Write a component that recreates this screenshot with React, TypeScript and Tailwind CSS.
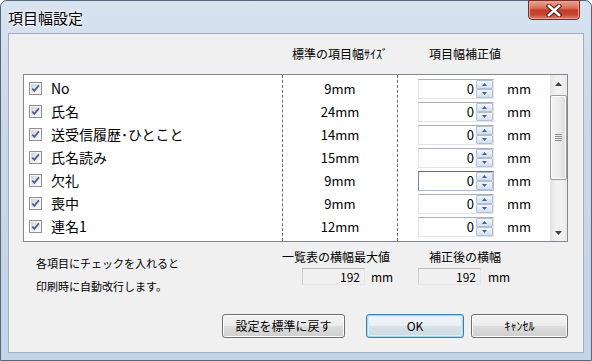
import React from 'react';

const rows = [
  { name: 'No', size: '9mm' },
  { name: '氏名', size: '24mm' },
  { name: '送受信履歴･ひとこと', size: '14mm' },
  { name: '氏名読み', size: '15mm' },
  { name: '欠礼', size: '9mm' },
  { name: '喪中', size: '9mm' },
  { name: '連名1', size: '12mm' },
];

function CheckBox() {
  return (
    <div className="w-[13px] h-[13px] shrink-0 border border-[#8f8f8f] bg-[#f6f6f6] p-[1px]">
      <div className="w-full h-full bg-[linear-gradient(135deg,#cfd2d8,#eeeff1_60%,#f7f7f7)] flex items-center justify-center">
        <svg width="9" height="9" viewBox="0 0 9 9">
          <path d="M1.2 4.5 L3.3 6.9 L7.9 1.4" stroke="#4a5c92" strokeWidth="1.7" fill="none" />
        </svg>
      </div>
    </div>
  );
}

function SpinHalf({ up }: { up: boolean }) {
  return (
    <div className="h-[9px] border border-[#b4c0d2] rounded-[1px] bg-[linear-gradient(to_bottom,#f2f6fb,#d3dff0)] flex items-center justify-center">
      <svg width="5" height="3" viewBox="0 0 5 3">
        {up ? <path d="M0 3 L2.5 0 L5 3Z" fill="#4c5f84" /> : <path d="M0 0 L2.5 3 L5 0Z" fill="#4c5f84" />}
      </svg>
    </div>
  );
}

function Spin({ focused }: { focused: boolean }) {
  return (
    <div
      className={
        focused
          ? 'ml-[20px] w-[76px] h-[20px] flex border border-[#a9bdd6] border-t-[#4f6f96] border-l-[#6f8bae] bg-white'
          : 'ml-[20px] w-[76px] h-[20px] flex border border-[#e2e3ea] border-t-[#abadb3] bg-white'
      }
    >
      <div className="flex-1 text-right pr-[2px] text-[13px] leading-[18px]">0</div>
      <div className="w-[17px] flex flex-col">
        <SpinHalf up={true} />
        <SpinHalf up={false} />
      </div>
    </div>
  );
}

function WinButton({ children, className, primary }: { children: React.ReactNode; className: string; primary?: boolean }) {
  return (
    <div
      className={
        primary
          ? `${className} h-[24px] rounded-[3px] border border-[#3c7fb1] shadow-[inset_0_0_0_1px_#9fd9f3,inset_0_0_0_2px_#d8eef8] bg-[linear-gradient(to_bottom,#f1f5f8_0%,#e9eff3_50%,#dae3ea_50%,#ccd7df_100%)] flex items-center justify-center text-[12px] leading-[14px]`
          : `${className} h-[24px] rounded-[3px] border border-[#707070] shadow-[inset_0_0_0_1px_#fbfbfb] bg-[linear-gradient(to_bottom,#f2f2f2_0%,#ebebeb_50%,#dddddd_50%,#cfcfcf_100%)] flex items-center justify-center text-[12px] leading-[14px]`
      }
    >
      {children}
    </div>
  );
}

export default function App() {
  return (
    <div className="w-[592px] h-[361px] bg-white font-['Noto_Sans_CJK_JP',sans-serif] text-black">
      <div className="w-[592px] h-[361px] flex flex-col rounded-t-[7px] border border-[#56677b] bg-[linear-gradient(to_bottom,#d8e3f0,#cbd8e9_35%,#c4d3e6)]">
        {/* title bar */}
        <div className="h-[32px] shrink-0 flex items-start">
          <div className="ml-[7px] mt-[8px] text-[15px] leading-[17px] [text-shadow:0_0_6px_#fff,0_0_3px_#fff]">項目幅設定</div>
          <div className="ml-auto mr-[11px] w-[52px] h-[20px] -mt-[1px] rounded-b-[4px] border border-[#7a2d24] shadow-[inset_0_0_0_1px_#e9a193] bg-[linear-gradient(to_bottom,#e9a593_0%,#d76e5c_40%,#c23c29_50%,#c94731_75%,#dd8366_100%)] flex items-center justify-center">
            <svg width="16" height="13" viewBox="0 0 16 13">
              <path d="M3 2 L13 11 M13 2 L3 11" stroke="#5b1c14" strokeWidth="4.6" strokeLinecap="square" />
              <path d="M3 2 L13 11 M13 2 L3 11" stroke="#ffffff" strokeWidth="2.6" strokeLinecap="square" />
            </svg>
          </div>
        </div>

        {/* client area */}
        <div className="mx-[7px] h-[320px] shrink-0 border border-[#9fb0c4] bg-[#f0f0f0] flex flex-col">
          {/* header */}
          <div className="ml-[14px] pt-[13px] flex text-[12px] leading-[14px]">
            <div className="w-[259px]" />
            <div className="w-[116px] text-center">標準の項目幅ｻｲｽﾞ</div>
            <div className="pl-[31px]">項目幅補正値</div>
          </div>

          {/* list */}
          <div className="ml-[14px] mt-[13px] w-[545px] h-[168px] border border-[#828790] bg-white flex overflow-hidden">
            <div className="w-[258px] pt-[2px]">
              {rows.map((r) => (
                <div key={r.name} className="h-[23px] flex items-center pl-[5px]">
                  <CheckBox />
                  <span className="ml-[9px] text-[14px] leading-[23px] whitespace-nowrap">{r.name}</span>
                </div>
              ))}
            </div>
            <div className="w-[116px] pt-[2px] border-x border-dashed border-[#6a6a6a]">
              {rows.map((r) => (
                <div key={r.name} className="h-[23px] text-center text-[13px] leading-[23px]">
                  {r.size}
                </div>
              ))}
            </div>
            <div className="flex-1 pt-[2px]">
              {rows.map((r, i) => (
                <div key={r.name} className="h-[23px] flex items-center">
                  <Spin focused={i === 4} />
                  <span className="ml-[13px] text-[13px] leading-[23px]">mm</span>
                </div>
              ))}
            </div>
            {/* scrollbar */}
            <div className="w-[17px] flex flex-col bg-[linear-gradient(to_right,#e3e3e3,#f1f1f1_35%,#f1f1f1_65%,#e8e8e8)]">
              <div className="h-[17px] flex items-center justify-center">
                <svg width="7" height="4" viewBox="0 0 7 4">
                  <path d="M0 4 L3.5 0 L7 4Z" fill="#404040" />
                </svg>
              </div>
              <div className="mt-[3px] h-[85px] rounded-[2px] border border-[#9b9b9b] shadow-[inset_0_0_0_1px_#fdfdfd] bg-[linear-gradient(to_right,#f4f4f4,#ececec_50%,#dcdcdc)] flex items-center justify-center">
                <svg width="7" height="8" viewBox="0 0 7 8">
                  <path d="M0 0.5 H7 M0 2.5 H7 M0 4.5 H7 M0 6.5 H7" stroke="#8c8c8c" strokeWidth="1" />
                </svg>
              </div>
              <div className="mt-auto h-[17px] flex items-center justify-center">
                <svg width="7" height="4" viewBox="0 0 7 4">
                  <path d="M0 0 L3.5 4 L7 0Z" fill="#404040" />
                </svg>
              </div>
            </div>
          </div>

          {/* info */}
          <div className="h-[72px] flex">
            <div className="ml-[27px] w-[246px] pt-[10px] text-[11px] leading-[23px]">
              <div>各項目にチェックを入れると</div>
              <div>印刷時に自動改行します。</div>
            </div>
            <div className="w-[136px] pt-[8px]">
              <div className="text-[12px] leading-[14px] whitespace-nowrap">一覧表の横幅最大値</div>
              <div className="mt-[4px] flex items-center">
                <div className="ml-[20px] w-[63px] h-[17px] border border-[#e6e6e6] border-t-[#b9b9b9] border-l-[#cfcfcf] bg-[#f0f0f0] text-right pr-[4px] text-[12px] leading-[15px]">192</div>
                <span className="ml-[6px] text-[12px] leading-[15px]">mm</span>
              </div>
            </div>
            <div className="pt-[8px]">
              <div className="pl-[11px] text-[12px] leading-[14px] whitespace-nowrap">補正後の横幅</div>
              <div className="mt-[4px] flex items-center">
                <div className="w-[63px] h-[17px] border border-[#e6e6e6] border-t-[#b9b9b9] border-l-[#cfcfcf] bg-[#f0f0f0] text-right pr-[4px] text-[12px] leading-[15px]">192</div>
                <span className="ml-[7px] text-[12px] leading-[15px]">mm</span>
              </div>
            </div>
          </div>

          {/* buttons */}
          <div className="flex">
            <WinButton className="ml-[213px] w-[123px]">設定を標準に戻す</WinButton>
            <WinButton className="ml-[21px] w-[98px]" primary>
              OK
            </WinButton>
            <WinButton className="ml-[7px] w-[97px]">ｷｬﾝｾﾙ</WinButton>
          </div>
        </div>
      </div>
    </div>
  );
}
